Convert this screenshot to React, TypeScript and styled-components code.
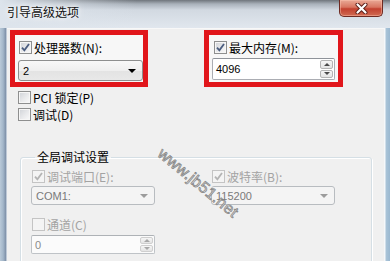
import styled, { createGlobalStyle } from 'styled-components';

const GlobalStyle = createGlobalStyle`
    html, body {
        margin: 0;
        padding: 0;
    }
    body {
        width: 390px;
        height: 261px;
        overflow: hidden;
        background: #f0f0f0;
        font-family: 'Noto Sans CJK SC', 'Liberation Sans', sans-serif;
    }
`;

const Window = styled.div`
    position: relative;
    width: 390px;
    height: 261px;
    display: flex;
    flex-direction: column;
    overflow: hidden;
`;

const TitleBar = styled.div`
    height: 28px;
    flex: none;
    display: flex;
    justify-content: space-between;
    align-items: flex-start;
    background:
        linear-gradient(to right, #dde4ec 0%, rgba(221, 228, 236, 0) 35%),
        linear-gradient(to bottom, #6f757c 0, #a9b1ba 4px, #d2d9e1 10px, #e1e7ee 100%);
`;

const Title = styled.div`
    font-size: 12px;
    line-height: 14px;
    padding: 5px 0 0 7px;
    color: #111;
    text-shadow: 0 0 4px #fff, 0 0 8px #fff;
`;

const CloseButton = styled.div`
    width: 44px;
    height: 17px;
    margin-right: 7px;
    box-sizing: border-box;
    border: 1px solid #6e2a22;
    border-top: none;
    border-radius: 0 0 5px 5px;
    background: linear-gradient(#e9a996, #d87560 45%, #c2412f 55%, #d06a52);
    box-shadow: inset 0 0 0 1px rgba(255, 200, 180, 0.45);
    display: flex;
    align-items: center;
    justify-content: center;
`;

const Body = styled.div`
    flex: 1;
    display: flex;
    min-height: 0;
`;

const LeftFrame = styled.div`
    width: 7px;
    flex: none;
    background: linear-gradient(to right, #b9c9d8, #a3b6c9 45%, #8294ab 80%, #dfe6ee 100%);
`;

const RightFrame = styled.div`
    width: 6px;
    flex: none;
    background: linear-gradient(to right, #f6f8fa 0, #f6f8fa 1px, #aac4d8 2px, #9ab8d0 100%);
`;

const Client = styled.div`
    flex: 1;
    background: #f0f0f0;
    border-top: 1px solid #f8f8f8;
    padding: 1px 0 0 3px;
    box-sizing: border-box;
`;

const TopRow = styled.div`
    display: flex;
    gap: 56px;
`;

const Highlight = styled.div<{ $width: number; $gap: number }>`
    width: ${({ $width }) => $width}px;
    height: 57px;
    box-sizing: border-box;
    border: 5px solid #e1161b;
    background: #f7f7f7;
    padding: 6px 0 0 3px;
    display: flex;
    flex-direction: column;
    gap: ${({ $gap }) => $gap}px;
`;

const CheckRow = styled.label<{ $indent?: number; $disabled?: boolean }>`
    display: flex;
    align-items: center;
    gap: 2px;
    height: 13px;
    margin-left: ${({ $indent }) => $indent ?? 1}px;
    font-size: 12px;
    line-height: 14px;
    color: ${({ $disabled }) => ($disabled ? '#a3a3a3' : '#000')};
    white-space: nowrap;
`;

const Box = styled.span<{ $disabled?: boolean }>`
    width: 13px;
    height: 13px;
    flex: none;
    box-sizing: border-box;
    border: 1px solid ${({ $disabled }) => ($disabled ? '#c4c4c4' : '#8e8f8f')};
    background: ${({ $disabled }) =>
        $disabled
            ? '#f4f4f4'
            : 'linear-gradient(135deg, #cfd2d7 0%, #e9eaec 55%, #fafafa 100%)'};
    box-shadow: inset 0 0 0 1px ${({ $disabled }) => ($disabled ? '#f4f4f4' : '#f6f6f6')};
    display: flex;
    align-items: center;
    justify-content: center;
`;

const Check = ({ checked, disabled }: { checked?: boolean; disabled?: boolean }) => (
    <Box $disabled={disabled}>
        {checked && (
            <svg width="9" height="9" viewBox="0 0 9 9">
                <path
                    d="M1 4.6 L3.4 7.4 L8 1"
                    fill="none"
                    stroke={disabled ? '#b4b4b4' : '#4b5d7f'}
                    strokeWidth="1.8"
                />
            </svg>
        )}
    </Box>
);

const Combo = styled.div<{ $width: number; $height: number; $disabled?: boolean }>`
    width: ${({ $width }) => $width}px;
    height: ${({ $height }) => $height}px;
    box-sizing: border-box;
    border: 1px solid ${({ $disabled }) => ($disabled ? '#b8bcc0' : '#8e8f8f')};
    border-radius: 3px;
    background: ${({ $disabled }) =>
        $disabled
            ? '#f4f4f4'
            : 'linear-gradient(#f8f8f8, #efefef 50%, #e3e3e3 51%, #e8e8e8)'};
    display: flex;
    align-items: center;
    justify-content: space-between;
    padding: 0 6px 0 4px;
    font-family: 'Liberation Sans', 'Noto Sans CJK SC', sans-serif;
    font-size: 11px;
    color: ${({ $disabled }) => ($disabled ? '#7a7a7a' : '#000')};
`;

const Arrow = styled.span<{ $disabled?: boolean }>`
    width: 0;
    height: 0;
    border-left: 4px solid transparent;
    border-right: 4px solid transparent;
    border-top: 4px solid ${({ $disabled }) => ($disabled ? '#9c9c9c' : '#000')};
`;

const Spin = styled.div<{ $width: number; $height: number; $disabled?: boolean }>`
    width: ${({ $width }) => $width}px;
    height: ${({ $height }) => $height}px;
    box-sizing: border-box;
    border: 1px solid ${({ $disabled }) => ($disabled ? '#bfc3c7' : '#abadb3')};
    border-top-color: ${({ $disabled }) => ($disabled ? '#aeb2b6' : '#8f939a')};
    border-radius: 2px;
    background: ${({ $disabled }) => ($disabled ? '#fbfbfb' : '#fff')};
    display: flex;
    align-items: center;
    justify-content: space-between;
    padding: 1px 1px 1px 3px;
    font-family: 'Liberation Sans', 'Noto Sans CJK SC', sans-serif;
    font-size: 11px;
    color: ${({ $disabled }) => ($disabled ? '#8a8a8a' : '#000')};
`;

const SpinButtons = styled.div`
    width: 13px;
    align-self: stretch;
    display: flex;
    flex-direction: column;
    gap: 1px;
`;

const SpinButton = styled.div<{ $down?: boolean; $disabled?: boolean }>`
    flex: 1;
    border: 1px solid ${({ $disabled }) => ($disabled ? '#cfcfcf' : '#b4b4b4')};
    border-radius: 2px;
    background: linear-gradient(#f6f6f6, #e4e4e4);
    display: flex;
    align-items: center;
    justify-content: center;

    &::after {
        content: '';
        border-left: 3px solid transparent;
        border-right: 3px solid transparent;
        ${({ $down, $disabled }) =>
            $down
                ? `border-top: 3px solid ${$disabled ? '#a8a8a8' : '#4a4a4a'};`
                : `border-bottom: 3px solid ${$disabled ? '#a8a8a8' : '#4a4a4a'};`}
    }
`;

const OptionList = styled.div`
    display: flex;
    flex-direction: column;
    gap: 4px;
    margin: 4px 0 0 7px;
`;

const Group = styled.fieldset`
    margin: 29px 0 0 10px;
    padding: 6px 0 0 10px;
    width: 352px;
    height: 120px;
    box-sizing: border-box;
    border: 1px solid #d5dfe5;
    border-radius: 3px;
    box-shadow: inset 1px 1px 0 #fff, 1px 1px 0 #fff;
`;

const Legend = styled.legend`
    margin-left: 4px;
    padding: 0 2px;
    font-size: 12px;
    line-height: 14px;
    color: #000;
`;

const GroupGrid = styled.div`
    display: grid;
    grid-template-columns: 124px 124px;
    column-gap: 56px;
    row-gap: 13px;
`;

const Field = styled.div<{ $gap: number }>`
    display: flex;
    flex-direction: column;
    gap: ${({ $gap }) => $gap}px;
`;

const Watermark = styled.div`
    position: absolute;
    left: 198px;
    top: 183px;
    transform: translate(-50%, -50%) rotate(39.5deg);
    font-family: 'Liberation Sans', sans-serif;
    font-size: 16px;
    letter-spacing: 0.3px;
    color: #dcdcdc;
    -webkit-text-stroke: 0.7px #808080;
    white-space: nowrap;
    pointer-events: none;
`;

const CloseGlyph = () => (
    <svg width="13" height="11" viewBox="0 0 13 11">
        <path d="M2.5 1.5 L10.5 9.5 M10.5 1.5 L2.5 9.5" stroke="#5a1d16" strokeWidth="4" strokeLinecap="round" />
        <path d="M2.5 1.5 L10.5 9.5 M10.5 1.5 L2.5 9.5" stroke="#fff" strokeWidth="2.2" strokeLinecap="round" />
    </svg>
);

export default function App() {
    return (
        <>
            <GlobalStyle />
            <Window>
                <TitleBar>
                    <Title>引导高级选项</Title>
                    <CloseButton>
                        <CloseGlyph />
                    </CloseButton>
                </TitleBar>
                <Body>
                    <LeftFrame />
                    <Client>
                        <TopRow>
                            <Highlight $width={138} $gap={6}>
                                <CheckRow>
                                    <Check checked />
                                    处理器数(N):
                                </CheckRow>
                                <Combo $width={125} $height={21}>
                                    2
                                    <Arrow />
                                </Combo>
                            </Highlight>
                            <Highlight $width={139} $gap={4}>
                                <CheckRow $indent={2}>
                                    <Check checked />
                                    最大内存(M):
                                </CheckRow>
                                <Spin $width={123} $height={22}>
                                    4096
                                    <SpinButtons>
                                        <SpinButton />
                                        <SpinButton $down />
                                    </SpinButtons>
                                </Spin>
                            </Highlight>
                        </TopRow>
                        <OptionList>
                            <CheckRow>
                                <Check />
                                PCI 锁定(P)
                            </CheckRow>
                            <CheckRow>
                                <Check />
                                调试(D)
                            </CheckRow>
                        </OptionList>
                        <Group>
                            <Legend>全局调试设置</Legend>
                            <GroupGrid>
                                <Field $gap={3}>
                                    <CheckRow $disabled>
                                        <Check checked disabled />
                                        调试端口(E):
                                    </CheckRow>
                                    <Combo $width={124} $height={19} $disabled>
                                        COM1:
                                        <Arrow $disabled />
                                    </Combo>
                                </Field>
                                <Field $gap={3}>
                                    <CheckRow $disabled>
                                        <Check checked disabled />
                                        波特率(B):
                                    </CheckRow>
                                    <Combo $width={124} $height={19} $disabled>
                                        115200
                                        <Arrow $disabled />
                                    </Combo>
                                </Field>
                                <Field $gap={4}>
                                    <CheckRow $disabled>
                                        <Check disabled />
                                        通道(C)
                                    </CheckRow>
                                    <Spin $width={124} $height={19} $disabled>
                                        0
                                        <SpinButtons>
                                            <SpinButton $disabled />
                                            <SpinButton $down $disabled />
                                        </SpinButtons>
                                    </Spin>
                                </Field>
                            </GroupGrid>
                        </Group>
                    </Client>
                    <RightFrame />
                </Body>
                <Watermark>www.jb51.net</Watermark>
            </Window>
        </>
    );
}
